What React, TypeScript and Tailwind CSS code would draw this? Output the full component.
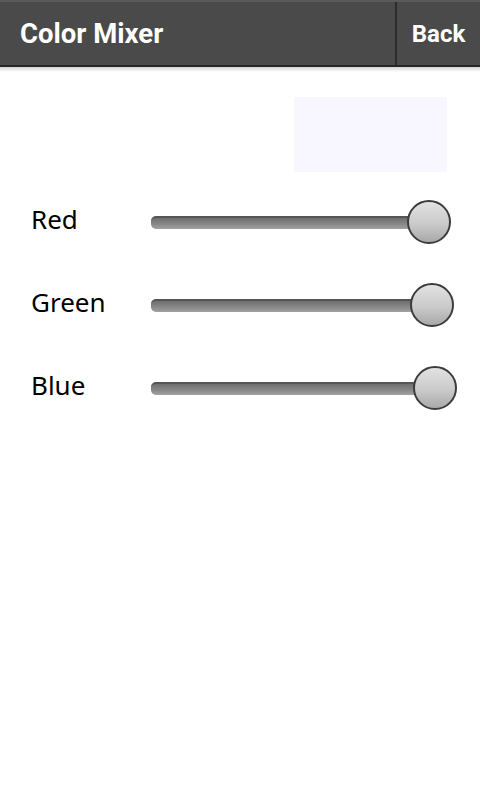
import React from 'react';

const rows = [
  { name: 'Red', track: 'w-[278px]' },
  { name: 'Green', track: 'w-[281px]' },
  { name: 'Blue', track: 'w-[284px]' },
];

function Slider({ track }: { track: string }) {
  return (
    <div className={`relative h-[44px] ${track} flex items-center`}>
      <div className="h-[13px] w-full rounded-[5px] border-t-2 border-[#555] bg-[linear-gradient(#6e6e6e,#8a8a8a_60%,#a2a2a2)]" />
      <div className="absolute right-[-22px] top-0 h-[44px] w-[44px] rounded-full border-2 border-[#3c3c3c] bg-[linear-gradient(#e2e2e2,#cacaca_55%,#a9a9a9)]" />
    </div>
  );
}

export default function App() {
  return (
    <div className="w-[480px] h-[800px] bg-white" style={{ fontFamily: '"Noto Sans", sans-serif' }}>
      <div className="flex h-[67px] border-t-2 border-b-2 border-t-[#5a5a5a] border-b-[#262626] bg-[#4a4a4a] text-white font-bold" style={{ fontFamily: 'Roboto, sans-serif' }}>
        <div className="flex flex-1 items-center pl-[20px] text-[27.5px]">Color Mixer</div>
        <div className="flex w-[85px] items-center justify-center border-l-2 border-l-[#2c2c2c] text-[24px]">Back</div>
      </div>
      <div className="h-[5px] bg-[linear-gradient(#d4d4d4,#fff)]" />
      <div className="flex justify-end pr-[33px] pt-[25px]">
        <div className="h-[75px] w-[153px] bg-[#f8f6fe]" />
      </div>
      <div className="mt-[28px] flex flex-col gap-[39px]">
        {rows.map((r) => (
          <div key={r.name} className="flex items-center">
            <div className="w-[151px] pb-[6px] pl-[31px] text-[26px] leading-none text-black">{r.name}</div>
            <Slider track={r.track} />
          </div>
        ))}
      </div>
    </div>
  );
}
